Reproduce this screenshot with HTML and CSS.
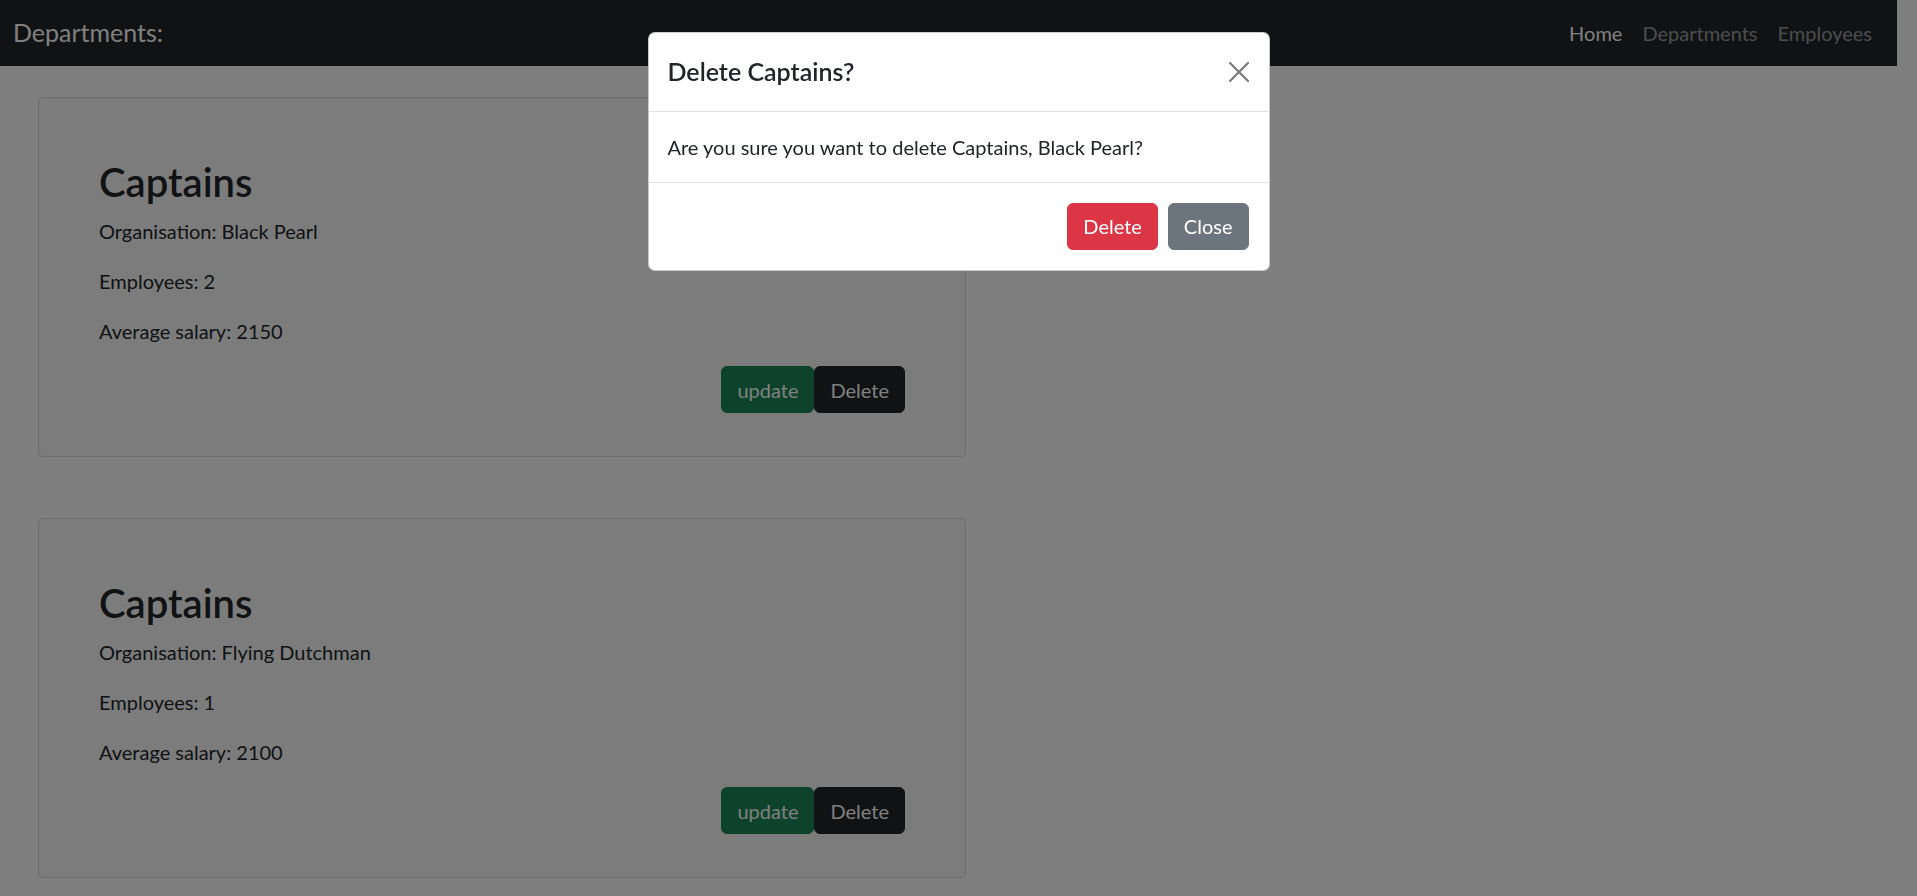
FILE: index.html
```html
<!DOCTYPE html>
<html lang="en">
<head>
<meta charset="utf-8">
<title>Departments</title>
<link rel="stylesheet" href="styles.css">
</head>
<body>
<nav class="navbar">
  <span class="brand">Departments:</span>
  <ul class="nav-links">
    <li><a class="nav-link active" href="#">Home</a></li>
    <li><a class="nav-link" href="#">Departments</a></li>
    <li><a class="nav-link" href="#">Employees</a></li>
  </ul>
</nav>
<main class="content">
  <div class="card">
    <h2 class="card-title">Captains</h2>
    <p>Organisation: Black Pearl</p>
    <p>Employees: 2</p>
    <p>Average salary: 2150</p>
    <div class="actions">
      <button class="btn btn-success">update</button><button class="btn btn-dark">Delete</button>
    </div>
  </div>
  <div class="card">
    <h2 class="card-title">Captains</h2>
    <p>Organisation: Flying Dutchman</p>
    <p>Employees: 1</p>
    <p>Average salary: 2100</p>
    <div class="actions">
      <button class="btn btn-success">update</button><button class="btn btn-dark">Delete</button>
    </div>
  </div>
</main>
<div class="backdrop"></div>
<div class="modal-wrap">
  <div class="modal">
    <div class="modal-header">
      <h5 class="modal-title">Delete Captains?</h5>
      <button class="btn-close" aria-label="Close">
        <svg width="20" height="20" viewBox="0 0 20 20"><path d="M1 1L19 19M19 1L1 19" stroke="#222" stroke-width="2.2" stroke-linecap="square"/></svg>
      </button>
    </div>
    <div class="modal-body">Are you sure you want to delete Captains, Black Pearl?</div>
    <div class="modal-footer">
      <button class="btn btn-danger">Delete</button>
      <button class="btn btn-secondary">Close</button>
    </div>
  </div>
</div>
</body>
</html>
```
FILE: styles.css
```css
* { box-sizing: border-box; }
html, body { height: 100%; }
body {
  margin: 0;
  padding-right: 20px;
  font-family: "Segoe UI", Lato, "Noto Sans", "Liberation Sans", sans-serif;
  font-size: 20px;
  line-height: 30px;
  color: #212529;
  background: #fff;
  overflow: hidden;
}
.navbar {
  height: 66px;
  background: #212529;
  display: flex;
  align-items: center;
  justify-content: space-between;
  padding: 0 15px 0 13px;
}
.brand {
  font-size: 25px;
  line-height: 37px;
  color: #fff;
  margin-top: -2px;
}
.nav-links {
  list-style: none;
  display: flex;
  margin: 0;
  padding: 0;
}
.nav-link {
  display: block;
  padding: 0 10px;
  color: rgba(255,255,255,.55);
  text-decoration: none;
  font-size: 20px;
  line-height: 30px;
}
.nav-link.active { color: #fff; }

.content {
  padding: 31px 0 0 38px;
}
.card {
  width: 928px;
  background: #f8f9fa;
  border: 1px solid rgba(0,0,0,.125);
  border-radius: 5px;
  padding: 60px 60px 43px;
  margin-bottom: 61px;
}
.card-title {
  font-size: 40px;
  font-weight: 600;
  line-height: 48px;
  margin: 0 0 10px;
}
.card p {
  margin: 0 0 20px;
}
.actions {
  display: flex;
  justify-content: flex-end;
}
.btn {
  font-family: inherit;
  font-size: 20px;
  line-height: 30px;
  padding: 7.5px 15px;
  border: 1px solid transparent;
  border-radius: 6px;
  color: #fff;
  cursor: pointer;
}
.btn-success { background: #198754; border-color: #198754; }
.btn-dark { background: #212529; border-color: #212529; }
.btn-danger { background: #dc3545; border-color: #dc3545; }
.btn-secondary { background: #6c757d; border-color: #6c757d; }

.backdrop {
  position: fixed;
  inset: 0;
  background: rgba(0,0,0,.5);
}
.modal-wrap {
  position: fixed;
  inset: 0;
  display: flex;
  justify-content: center;
  align-items: flex-start;
}
.modal {
  width: 622px;
  margin-top: 32px;
  background: #fff;
  border: 1px solid rgba(0,0,0,.2);
  border-radius: 7px;
}
.modal-header {
  display: flex;
  align-items: center;
  justify-content: space-between;
  padding: 20px 20px 20px 19px;
  border-bottom: 1px solid #dee2e6;
}
.modal-title {
  margin: 0;
  font-size: 25px;
  font-weight: 600;
  line-height: 37.5px;
}
.btn-close {
  background: none;
  border: 0;
  padding: 0;
  width: 20px;
  height: 20px;
  opacity: .6;
  display: flex;
  margin-right: 0;
}
.modal-body {
  padding: 20px 20px 20px 19px;
}
.modal-footer {
  display: flex;
  justify-content: flex-end;
  padding: 15px;
  border-top: 1px solid #dee2e6;
}
.modal-footer .btn { margin: 5px; }
```
